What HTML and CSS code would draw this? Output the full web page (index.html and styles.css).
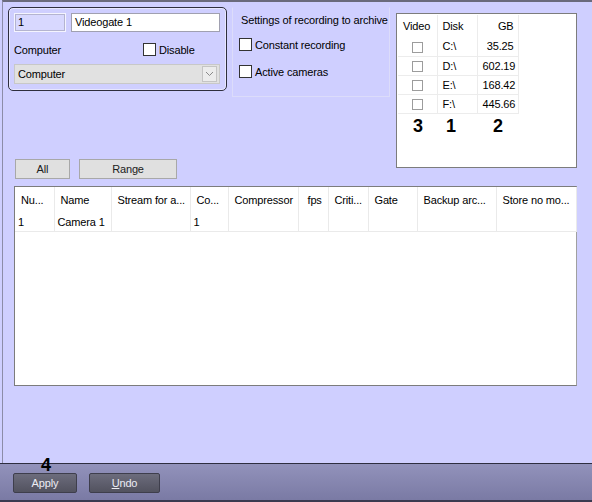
FILE: index.html
```html
<!DOCTYPE html>
<html lang="en">
<head>
  <meta charset="UTF-8">
  <title>Videogate</title>
  <link rel="stylesheet" href="styles.css">
</head>
<body>
  <div class="window">
    <div class="top">
      <div class="left">
        <div class="row">
          <div class="device-panel">
            <div class="inputs">
              <div class="field id-field">1</div>
              <div class="field name-field">Videogate 1</div>
            </div>
            <div class="computer-line">
              <span>Computer</span>
              <label class="check-label disable"><span class="check"></span>Disable</label>
            </div>
            <div class="select">
              <span>Computer</span>
              <span class="select-arrow">
                <svg width="9" height="6" viewBox="0 0 9 6"><path d="M1 1 L4.5 4.5 L8 1" fill="none" stroke="#8a8a8a" stroke-width="1"/></svg>
              </span>
            </div>
          </div>
          <div class="settings">
            <div class="settings-title">Settings of recording to archive</div>
            <label class="check-label"><span class="check"></span>Constant recording</label>
            <label class="check-label"><span class="check"></span>Active cameras</label>
          </div>
        </div>
        <div class="filter-buttons">
          <div class="btn btn-all">All</div>
          <div class="btn btn-range">Range</div>
        </div>
      </div>
      <div class="disks">
        <table class="disk-table">
          <colgroup><col class="d1"><col class="d2"><col class="d3"></colgroup>
          <tr><th>Video</th><th>Disk</th><th class="num">GB</th></tr>
          <tr><td class="c"><span class="flat-check"></span></td><td>C:\</td><td class="num">35.25</td></tr>
          <tr><td class="c"><span class="flat-check"></span></td><td>D:\</td><td class="num">602.19</td></tr>
          <tr><td class="c"><span class="flat-check"></span></td><td>E:\</td><td class="num">168.42</td></tr>
          <tr><td class="c"><span class="flat-check"></span></td><td>F:\</td><td class="num">445.66</td></tr>
        </table>
        <div class="marks">
          <span class="mark m3">3</span>
          <span class="mark m1">1</span>
          <span class="mark m2">2</span>
        </div>
      </div>
    </div>

    <div class="grid">
      <table class="cams">
        <colgroup>
          <col class="w1"><col class="w2"><col class="w3"><col class="w4"><col class="w5">
          <col class="w6"><col class="w7"><col class="w8"><col class="w9"><col class="w10">
        </colgroup>
        <tr class="head">
          <th>Nu...</th>
          <th>Name</th>
          <th>Stream for a...</th>
          <th>Co...</th>
          <th>Compressor</th>
          <th class="fps">fps</th>
          <th>Criti...</th>
          <th>Gate</th>
          <th>Backup arc...</th>
          <th>Store no mo...</th>
        </tr>
        <tr>
          <td>1</td><td>Camera 1</td><td></td><td>1</td><td></td><td></td><td></td><td></td><td></td><td></td>
        </tr>
      </table>
    </div>

    <div class="footer">
      <span class="mark m4">4</span>
      <div class="dark-btn apply">Apply</div>
      <div class="dark-btn undo"><u>U</u>ndo</div>
    </div>
  </div>
</body>
</html>
```

FILE: styles.css
```css
html, body { margin: 0; padding: 0; }
body { font-family: "Liberation Sans", Arial, sans-serif; font-size: 11px; letter-spacing: -0.15px; color: #000; background: #cfcfff; width: 592px; height: 502px; overflow: hidden; }

.window { position: relative; margin-left: 2px; border-left: 1px solid #8c8ca8; border-top: 2px solid #6a6a7c; box-sizing: border-box; height: 502px; display: flex; flex-direction: column; }

.top { display: flex; padding: 5px 0 0 5px; height: 177px; box-sizing: border-box; }
.left { display: flex; flex-direction: column; width: 388px; }
.row { display: flex; gap: 5px; align-items: flex-start; }

/* device panel */
.device-panel { width: 219px; height: 84px; box-sizing: border-box; border: 1px solid #2e2e3e; border-radius: 5px; box-shadow: inset 0 0 0 1px #e6e6ff; padding: 5px 5px 0 5px; }
.inputs { display: flex; gap: 5px; }
.field { height: 19px; box-sizing: border-box; border: 1px solid #a0a0b0; padding: 2px 3px; line-height: 13px; }
.id-field { width: 52px; background: #d8d8ff; border-color: #f4f4ff; box-shadow: inset 0 0 0 1px #b4b4d0; }
.name-field { width: 149px; background: #fff; }
.computer-line { display: flex; align-items: center; height: 13px; margin-top: 11px; }
.computer-line .disable { margin-left: auto; width: 78px; }
.select { margin-top: 8px; width: 206px; height: 20px; box-sizing: border-box; background: #e1e1e1; border: 1px solid #c8c8c8; display: flex; align-items: center; justify-content: space-between; padding: 0 2px 0 3px; }
.select-arrow { width: 15px; height: 16px; box-sizing: border-box; border: 1px solid #c4c4c4; background: #ececec; display: flex; align-items: center; justify-content: center; }

.check-label { display: flex; align-items: center; gap: 3px; }
.check { display: inline-block; width: 13px; height: 13px; box-sizing: border-box; background: #fff; border: 1px solid #333; flex: none; }

/* settings group */
.settings { width: 158px; height: 90px; box-sizing: border-box; border: 1px solid #dcdcfa; border-top-color: transparent; padding: 5px 0 0 6px; }
.settings-title { padding-left: 2px; height: 14px; line-height: 14px; white-space: nowrap; }
.settings .check-label { margin-top: 11px; }
.settings .check-label + .check-label { margin-top: 14px; }

.filter-buttons { display: flex; gap: 9px; margin: 62px 0 0 7px; }
.btn { height: 20px; box-sizing: border-box; background: #e0e0e0; border: 1px solid #a8a8a8; text-align: center; line-height: 18px; color: #202020; }
.btn-all { width: 55px; }
.btn-range { width: 98px; }

/* disks */
.disks { margin: 6px 0 0 0; width: 181px; height: 155px; box-sizing: border-box; background: #fff; border: 1px solid #7c7c7c; padding: 1px 0 0 1px; }
.disk-table { border-collapse: collapse; table-layout: fixed; width: 120px; }
.d1 { width: 39px; } .d2 { width: 40px; } .d3 { width: 41px; }
.disk-table th { font-weight: normal; height: 22px; padding: 0 5px; text-align: left; border-right: 1px solid #ececec; box-sizing: border-box; }
.disk-table td { height: 19px; padding: 0 5px; border-right: 1px solid #ececec; border-bottom: 1px solid #ececec; box-sizing: border-box; }
.disk-table .num { text-align: right; padding-right: 4px; }
.disk-table .c { text-align: center; }
.flat-check { display: inline-block; width: 11px; height: 11px; box-sizing: border-box; border: 1px solid #9c9c9c; vertical-align: middle; }

.marks { position: relative; height: 24px; }
.mark { position: absolute; font-weight: bold; font-size: 18px; line-height: 18px; letter-spacing: 0; }
.m3 { left: 15px; top: 3px; }
.m1 { left: 48px; top: 3px; }
.m2 { left: 95px; top: 3px; }

/* camera grid */
.grid { margin: 7px 0 0 11px; width: 563px; height: 200px; box-sizing: border-box; background: #fff; border: 1px solid #7c7c7c; border-right-color: #a0a0a0; }
.cams { border-collapse: collapse; table-layout: fixed; width: 561px; }
.w1 { width: 39px; } .w2 { width: 57px; } .w3 { width: 79px; } .w4 { width: 38px; }
.w5 { width: 70px; } .w6 { width: 30px; } .w7 { width: 40px; } .w8 { width: 49px; }
.w9 { width: 79px; } .w10 { width: 80px; }
.cams th { font-weight: normal; text-align: left; height: 26px; padding: 0 0 0 6px; white-space: nowrap; overflow: hidden; border-right: 1px solid #eaeaea; box-sizing: border-box; }
.cams td { height: 18px; padding: 0 0 0 3px; border-right: 1px solid #eaeaea; border-bottom: 1px solid #eaeaea; box-sizing: border-box; }
.cams .fps { padding-left: 9px; }

/* footer */
.footer { position: relative; margin-top: auto; margin-left: -3px; height: 39px; box-sizing: border-box; border-top: 1px solid #2e2e40; border-bottom: 2px solid #3a3a50; background: linear-gradient(#9292bb, #7a7aa4); display: flex; gap: 12px; padding: 9px 0 0 13px; }
.dark-btn { height: 20px; box-sizing: border-box; border: 1px solid #3e3e4c; border-radius: 2px; background: linear-gradient(#6c6c7c, #52525f); color: #ececf4; text-align: center; line-height: 18px; }
.apply { width: 64px; }
.undo { width: 71px; }
.m4 { left: 41px; top: -8px; }
```
